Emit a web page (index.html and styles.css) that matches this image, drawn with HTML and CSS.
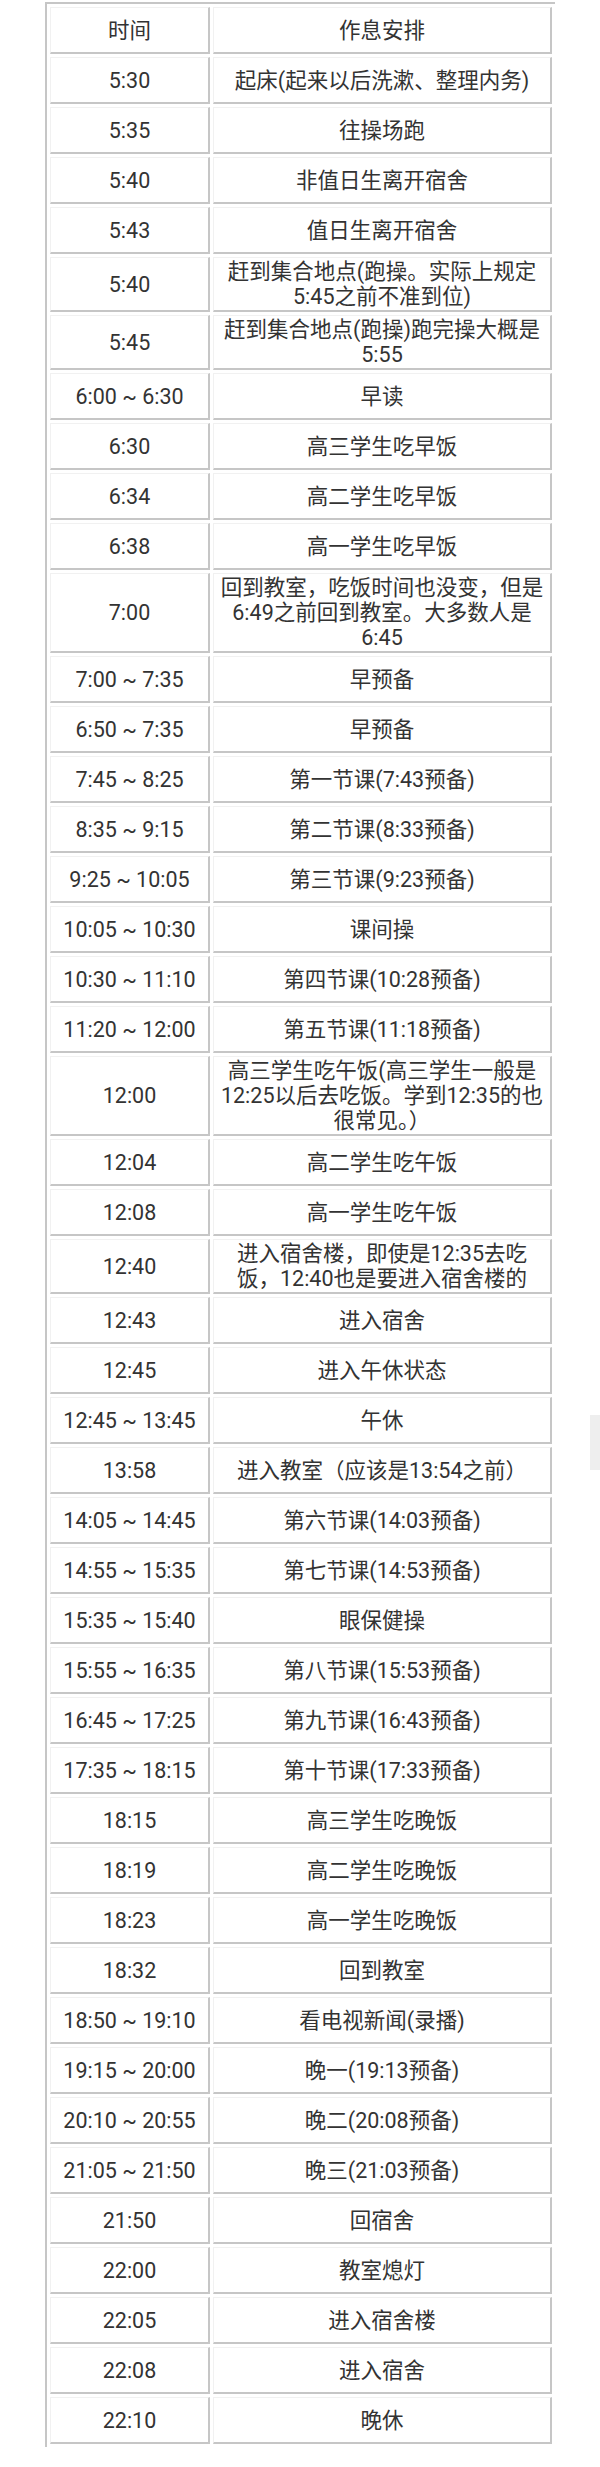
FILE: index.html
```html
<!DOCTYPE html>
<html lang="zh-CN">
<head>
<meta charset="utf-8">
<title>作息安排</title>
<link rel="stylesheet" href="styles.css">
</head>
<body>
<table class="schedule">
  <colgroup><col class="c-time"><col class="c-plan"></colgroup>
  <tbody>
    <tr><td>时间</td><td>作息安排</td></tr>
    <tr><td>5:30</td><td>起床(起来以后洗漱、整理内务)</td></tr>
    <tr><td>5:35</td><td>往操场跑</td></tr>
    <tr><td>5:40</td><td>非值日生离开宿舍</td></tr>
    <tr><td>5:43</td><td>值日生离开宿舍</td></tr>
    <tr><td>5:40</td><td>赶到集合地点(跑操。实际上规定5:45之前不准到位)</td></tr>
    <tr><td>5:45</td><td>赶到集合地点(跑操)跑完操大概是5:55</td></tr>
    <tr><td>6:00 ~ 6:30</td><td>早读</td></tr>
    <tr><td>6:30</td><td>高三学生吃早饭</td></tr>
    <tr><td>6:34</td><td>高二学生吃早饭</td></tr>
    <tr><td>6:38</td><td>高一学生吃早饭</td></tr>
    <tr><td>7:00</td><td>回到教室，吃饭时间也没变，但是6:49之前回到教室。大多数人是6:45</td></tr>
    <tr><td>7:00 ~ 7:35</td><td>早预备</td></tr>
    <tr><td>6:50 ~ 7:35</td><td>早预备</td></tr>
    <tr><td>7:45 ~ 8:25</td><td>第一节课(7:43预备)</td></tr>
    <tr><td>8:35 ~ 9:15</td><td>第二节课(8:33预备)</td></tr>
    <tr><td>9:25 ~ 10:05</td><td>第三节课(9:23预备)</td></tr>
    <tr><td>10:05 ~ 10:30</td><td>课间操</td></tr>
    <tr><td>10:30 ~ 11:10</td><td>第四节课(10:28预备)</td></tr>
    <tr><td>11:20 ~ 12:00</td><td>第五节课(11:18预备)</td></tr>
    <tr><td>12:00</td><td>高三学生吃午饭(高三学生一般是12:25以后去吃饭。学到12:35的也很常见。）</td></tr>
    <tr><td>12:04</td><td>高二学生吃午饭</td></tr>
    <tr><td>12:08</td><td>高一学生吃午饭</td></tr>
    <tr><td>12:40</td><td>进入宿舍楼，即使是12:35去吃饭，12:40也是要进入宿舍楼的</td></tr>
    <tr><td>12:43</td><td>进入宿舍</td></tr>
    <tr><td>12:45</td><td>进入午休状态</td></tr>
    <tr><td>12:45 ~ 13:45</td><td>午休</td></tr>
    <tr><td>13:58</td><td>进入教室（应该是13:54之前）</td></tr>
    <tr><td>14:05 ~ 14:45</td><td>第六节课(14:03预备)</td></tr>
    <tr><td>14:55 ~ 15:35</td><td>第七节课(14:53预备)</td></tr>
    <tr><td>15:35 ~ 15:40</td><td>眼保健操</td></tr>
    <tr><td>15:55 ~ 16:35</td><td>第八节课(15:53预备)</td></tr>
    <tr><td>16:45 ~ 17:25</td><td>第九节课(16:43预备)</td></tr>
    <tr><td>17:35 ~ 18:15</td><td>第十节课(17:33预备)</td></tr>
    <tr><td>18:15</td><td>高三学生吃晚饭</td></tr>
    <tr><td>18:19</td><td>高二学生吃晚饭</td></tr>
    <tr><td>18:23</td><td>高一学生吃晚饭</td></tr>
    <tr><td>18:32</td><td>回到教室</td></tr>
    <tr><td>18:50 ~ 19:10</td><td>看电视新闻(录播)</td></tr>
    <tr><td>19:15 ~ 20:00</td><td>晚一(19:13预备)</td></tr>
    <tr><td>20:10 ~ 20:55</td><td>晚二(20:08预备)</td></tr>
    <tr><td>21:05 ~ 21:50</td><td>晚三(21:03预备)</td></tr>
    <tr><td>21:50</td><td>回宿舍</td></tr>
    <tr><td>22:00</td><td>教室熄灯</td></tr>
    <tr><td>22:05</td><td>进入宿舍楼</td></tr>
    <tr><td>22:08</td><td>进入宿舍</td></tr>
    <tr><td>22:10</td><td>晚休</td></tr>
  </tbody>
</table>
<div class="scroll-thumb"></div>
</body>
</html>
```
FILE: styles.css
```css
html, body {
  margin: 0;
  padding: 0;
  background: #ffffff;
}

body {
  position: relative;
  font-family: Roboto, "Noto Sans CJK SC", "Noto Sans", sans-serif;
  font-size: 21.5px;
  line-height: 25px;
  color: #333333;
}

.schedule {
  margin: 2px 0 0 45px;
  width: 510px;
  table-layout: fixed;
  border-collapse: separate;
  border-spacing: 3px;
  border-top: 2px solid #c6c6c6;
  border-left: 2px solid #c6c6c6;
  border-right: 0;
  border-bottom: 0;
}

.c-time { width: 160px; }
.c-plan { width: 339px; }

.schedule td {
  box-sizing: border-box;
  height: 47px;
  padding: 1px 4px;
  text-align: center;
  vertical-align: middle;
  border-style: solid;
  border-width: 1px 2px 2px 1px;
  border-color: #f1f1f1 #c6c6c6 #c6c6c6 #f1f1f1;
}

.scroll-thumb {
  position: absolute;
  left: 590px;
  top: 1415px;
  width: 10px;
  height: 55px;
  background: #eeeeee;
}
```
